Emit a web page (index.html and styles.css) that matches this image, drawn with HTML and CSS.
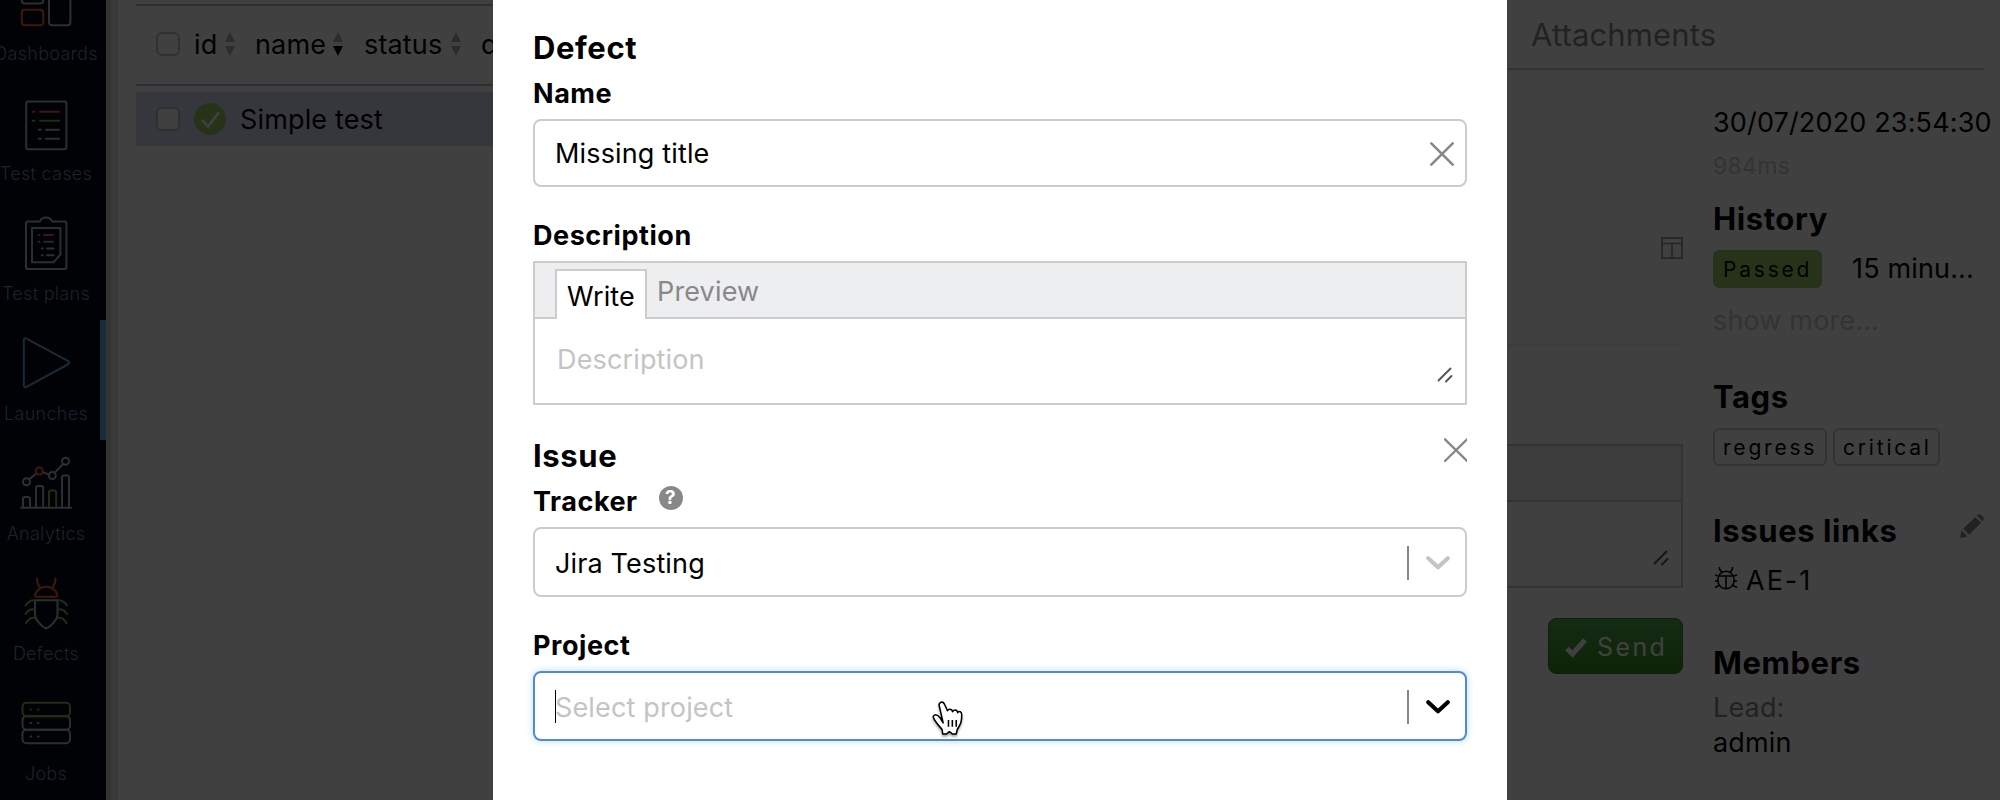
FILE: index.html
```html
<!DOCTYPE html>
<html lang="en">
<head>
    <meta charset="utf-8">
    <title>Launches</title>
    <link rel="stylesheet" href="styles.css">
</head>
<body>

<div class="app">
  <nav class="sidebar">
    <a class="nav-item">
      <svg class="nav-icon" viewBox="0 0 52 52">
        <rect x="1.8" y="2" width="21.4" height="24.6" rx="3"/>
        <rect class="red" x="1.8" y="32.8" width="21.4" height="15.4" rx="3"/>
        <rect x="29" y="2" width="21.4" height="46.2" rx="3"/>
      </svg>
      <span>Dashboards</span>
    </a>
    <a class="nav-item">
      <svg class="nav-icon" viewBox="0 0 52 52">
        <rect x="6.2" y="4.4" width="40.2" height="47.8" rx="2"/>
        <path class="red" d="M12.5 14.7h2M20 14.7h19"/>
        <path class="green" d="M12.5 23.7h2M20 23.7h19"/>
        <path d="M18.8 32.7h2M26 32.7h13M18.8 41.7h2M26 41.7h13"/>
      </svg>
      <span>Test cases</span>
    </a>
    <a class="nav-item">
      <svg class="nav-icon" viewBox="0 0 52 52">
        <path d="M20 4.4H8a2 2 0 0 0-2 2V50a2 2 0 0 0 2 2h36.4a2 2 0 0 0 2-2V6.4a2 2 0 0 0-2-2H32C31 1.5 29 .5 26 .5S21 1.5 20 4.4z"/>
        <path d="M12 11h28.4v26.5L33.5 45.3H12z"/>
        <path class="red" d="M18.5 18h1M24 18h9"/>
        <path class="green" d="M18.5 24.7h1M24 24.7h9"/>
        <path d="M21.8 31.5h1M27 31.5h6.5M21.8 38.3h1M27 38.3h6.5"/>
      </svg>
      <span>Test plans</span>
    </a>
    <a class="nav-item active">
      <svg class="nav-icon" viewBox="0 0 52 52">
        <path d="M3.8 3.5Q3.8 .3 6.5 1.6L47.800 23.900Q50.500 25.800 47.800 27.500L6.500 49.800Q3.800 51 3.800 48z"/>
      </svg>
      <span>Launches</span>
    </a>
    <a class="nav-item">
      <svg class="nav-icon" viewBox="0 0 52 52">
        <path d="M1 50.8h50M3 50V42a2 2 0 0 1 2-2h3a2 2 0 0 1 2 2v8M16 50V31a2 2 0 0 1 2-2h3.2a2 2 0 0 1 2 2v19M42 50V20.5a2 2 0 0 1 2-2h3a2 2 0 0 1 2 2V50"/>
        <path class="green" d="M29 49.5V35.5a2 2 0 0 1 2-2h3.2a2 2 0 0 1 2 2v14"/>
        <path d="M9.3 22.3l7.2-6M22.8 15.2l6 2.2M34.6 15.9l8.6-9.2"/>
        <circle cx="6.5" cy="24.7" r="3.5"/>
        <circle class="red" cx="19.3" cy="14" r="3.5"/>
        <circle cx="32.3" cy="18.5" r="3.5"/>
        <circle cx="45.5" cy="4.3" r="3.5"/>
      </svg>
      <span>Analytics</span>
    </a>
    <a class="nav-item">
      <svg class="nav-icon" viewBox="0 0 52 52">
        <path class="red" d="M17 1.5C17 6 18 8 20 10.5M35.5 1.5C35.5 6 34.5 8 32.5 10.5M16.2 19.8c-1.2 0-1.4-1-1.2-2C17 12.5 21 9.800 26.200 9.800s9.200 2.700 11.200 8c.2 1 0 2-1.200 2z"/>
        <path d="M15 23.2h22.5V37c0 6-7 13-11.3 14.5C22 50 15 43 15 37z"/>
        <path class="green" d="M14.5 23.2C10 23 8 24.5 5.5 28.5M14.5 32.5C10 31.5 8 33.5 5.5 37M14.5 41c-4-1-6 1-8.5 5M38 23.2c4.5-.2 6.5 1.3 9 5.3M38 32.5c4.5-1 6.5 1 9 4.5M38 41c4-1 6 1 8.5 5"/>
      </svg>
      <span>Defects</span>
    </a>
    <a class="nav-item">
      <svg class="nav-icon" viewBox="0 0 52 52">
        <rect x="2.5" y="19.3" width="47.5" height="13.5" rx="4"/>
        <rect x="2.5" y="32.8" width="47.5" height="13.5" rx="4"/>
        <rect class="green" x="2.5" y="5.8" width="47.5" height="13.5" rx="4"/>
        <path class="red" d="M10.5 12.5h.8M17.8 12.5h.8"/>
        <path d="M10.5 26h.8M17.8 26h.8M10.5 39.5h.8M17.8 39.5h.8"/>
      </svg>
      <span>Jobs</span>
    </a>
  </nav>
  <div class="sidebar-edge"></div>

  <section class="tests">
    <div class="tests-head">
      <span class="checkbox"></span>
      <span class="col col-id">id</span>
      <svg class="sort" viewBox="0 0 10 24"><path d="M5 0l5 10H0z"/><path d="M5 24L0 14h10z"/></svg>
      <span class="col col-name">name</span>
      <svg class="sort" viewBox="0 0 10 24"><path d="M5 0l5 10H0z"/><path class="on" d="M5 24L0 14h10z"/></svg>
      <span class="col col-status">status</span>
      <svg class="sort" viewBox="0 0 10 24"><path d="M5 0l5 10H0z"/><path d="M5 24L0 14h10z"/></svg>
      <span class="col col-duration">d</span>
    </div>
    <div class="test-row">
      <span class="checkbox"></span>
      <svg class="status-icon" viewBox="0 0 32 32"><circle cx="16" cy="16" r="16"/><path d="M8.5 17.5l5.5 6L24.5 10"/></svg>
      <span class="test-name">Simple test</span>
    </div>
  </section>

  <section class="details">
    <div class="details-tabs"><span class="details-tab">Attachments</span></div>
    <div class="details-body">
      <div class="details-main">
        <div class="scenario">
          <svg class="layout-icon" viewBox="0 0 22 22"><path d="M1 1h20v20H1zM1 6.5h20M11 6.5V21"/></svg>
        </div>
        <div class="editor comment">
          <div class="editor-tabs"></div>
          <div class="editor-text">
            <svg class="resize" viewBox="0 0 14 14"><path d="M.5 12.5L12.5 .5M8 13.5L13.5 8"/></svg>
          </div>
        </div>
        <button class="send">
          <svg class="send-icon" viewBox="0 0 22 20"><path d="M2 11.5l5.5 5.5L20 3"/></svg>
          <span>Send</span>
        </button>
      </div>

      <aside class="details-side">
        <div class="date">30/07/2020 23:54:30</div>
        <div class="duration">984ms</div>
        <h3 class="side-title history-title">History</h3>
        <div class="history">
          <span class="badge">Passed</span>
          <span class="ago">15 minu...</span>
        </div>
        <div class="more">show more...</div>
        <h3 class="side-title tags-title">Tags</h3>
        <div class="tags">
          <span class="tag tag-regress">regress</span>
          <span class="tag tag-critical">critical</span>
        </div>
        <div class="side-head">
          <h3 class="side-title">Issues links</h3>
          <svg class="pencil" viewBox="0 0 24 24"><path d="M0 24l1.5-7.5 6 6zM3.2 14.8L15.3 2.9l5.8 5.8L9.2 20.8zM16.8 1.5C18.5 0 20 0 21.5 1.3l1.3 1.3c1.300 1.500 1.300 3-.2 4.600z"/></svg>
        </div>
        <div class="issue">
          <svg class="bug" viewBox="0 0 22 23"><path d="M4.5 0c-.3 2.5.5 4 3 5M17.5 0c.3 2.5-.5 4-3 5M3.5 9h15M11 9v12.5M0 8l3 1M22 8l-3 1M0 14h3M22 14h-3M0 20.5l4-2M22 20.5l-4-2"/><ellipse cx="11" cy="13" rx="8.2" ry="8.7"/></svg>
          <span>AE-1</span>
        </div>
        <h3 class="side-title members-title">Members</h3>
        <div class="lead">Lead:</div>
        <div class="member">admin</div>
      </aside>
    </div>
  </section>
</div>

<div class="overlay">
  <div class="modal">
    <h2 class="modal-title">Defect</h2>
    <label class="label">Name</label>
    <div class="field">
      <span class="field-value">Missing title</span>
      <svg class="clear" viewBox="0 0 24 24"><path d="M1.3 1.3l21.4 21.4M22.7 1.3L1.3 22.7"/></svg>
    </div>

    <label class="label next">Description</label>
    <div class="editor">
      <div class="editor-tabs">
        <span class="tab tab-write">Write</span>
        <span class="tab tab-preview">Preview</span>
      </div>
      <div class="editor-text">
        <span class="placeholder">Description</span>
        <svg class="resize" viewBox="0 0 14 14"><path d="M.5 12.5L12.5 .5M8 13.5L13.5 8"/></svg>
      </div>
    </div>

    <div class="modal-head">
      <h2 class="modal-title">Issue</h2>
      <svg class="remove" viewBox="0 0 23 24"><path d="M1 1.3l22 21.7M23 1.3L1 23"/></svg>
    </div>
    <label class="label label-tracker">
      <span>Tracker</span>
      <span class="help">?</span>
    </label>
    <div class="field select">
      <span class="field-value">Jira Testing</span>
      <svg class="chevron" viewBox="0 0 24 14"><path d="M2.2 2.2L12 11.3l9.8-9.1"/></svg>
    </div>

    <label class="label next">Project</label>
    <div class="field select focused">
      <span class="caret"></span>
      <span class="field-value placeholder">Select project</span>
      <svg class="chevron" viewBox="0 0 24 14"><path d="M2.2 2.2L12 11.3l9.8-9.1"/></svg>
    </div>
  </div>
  <svg class="pointer" viewBox="0 0 32 36"><path d="M11.5 22.5L8.5 17.5C7 15.5 4.5 13.5 2.500 14.500S1.200 17.500 3 20c2 3.500 5 6.500 7.500 9.500l.5 4.500h4c1-1 2-2 3-2.300 1 .3 2 1.300 3 2.300h4l1-4.500c2-3.500 4.500-6 4.500-11 0-4 1-6.500-1.200-7.500-1.300-.4-2.300 0-2.800 1-.3-2-1.200-2.800-2.500-2.800s-2.200.7-2.700 1.800C20.800 9.300 20 8.500 18.500 8.500c-1.200 0-2 .5-2.500 1.500L13 3.500C12.200 1.200 10.800.8 9.300 1.300S7 3.300 7.500 5z"/><path class="fingers" d="M17 19.500v7M21 19.500v7M25 19.500v7"/></svg>
</div>

</body>
</html>
```
FILE: styles.css
```css
* {
    box-sizing: border-box;
}

body {
    margin: 0;
    height: 800px;
    overflow: hidden;
    font-family: Inter, "Liberation Sans", sans-serif;
    font-size: 27px;
    letter-spacing: 0.15px;
    color: #000;
    background: #fff;
}

h2, h3 {
    margin: 0;
    font-size: 31px;
    line-height: 39px;
    height: 40px;
    font-weight: 700;
    letter-spacing: 0.6px;
}

svg {
    display: block;
    flex: none;
    fill: none;
    overflow: visible;
}

.app {
    display: flex;
    height: 800px;
    overflow: hidden;
}

/* sidebar */
.sidebar {
    flex: none;
    width: 120px;
    height: 840px;
    margin: -40px 0 0 -14px;
    background: #000818;
}

.nav-item {
    display: flex;
    flex-direction: column;
    align-items: center;
    height: 120px;
    padding-top: 17px;
    color: #7a8494;
    font-size: 18px;
    font-weight: 300;
    line-height: 24px;
    letter-spacing: 0.3px;
}

.nav-item span {
    margin-top: 13px;
}

.nav-item.active {
    color: #5a88ac;
    box-shadow: inset -6px 0 #68b0dc;
}

.nav-icon {
    width: 52px;
    height: 52px;
    stroke: #b4b8bc;
    stroke-width: 2;
    stroke-linecap: round;
    stroke-linejoin: round;
}

.active .nav-icon {
    stroke: #68a8d0;
}

.nav-icon .red {
    stroke: #fd5a3e;
}

.nav-icon .green {
    stroke: #84b452;
}

.sidebar-edge {
    flex: none;
    width: 12px;
    background: #e8e8e8;
    border-left: 5px solid #ccc;
}

/* tests list */
.tests {
    flex: none;
    width: 704px;
    margin: 4px 20px 0 18px;
    border-top: 2px solid #b8b8b8;
}

.tests-head,
.test-row {
    display: flex;
    align-items: center;
    padding-left: 20px;
}

.tests-head {
    height: 80px;
    padding-bottom: 2px;
    border-bottom: 2px solid #b8b8b8;
}

.checkbox {
    flex: none;
    width: 24px;
    height: 24px;
    border: 2px solid #c0c0c0;
    border-radius: 6px;
    background: #fff;
}

.test-row .checkbox {
    border-color: #bbb;
}

.col {
    margin-left: 14px;
}

.col-id {
    width: 23px;
}

.col-name {
    width: 70px;
    margin-left: 20px;
}

.col-status {
    width: 79px;
    margin-left: 21px;
}

.col-duration {
    margin-left: 20px;
}

.sort {
    width: 10px;
    height: 24px;
    margin-left: 8px;
    fill: #b0b0b0;
}

.sort .on {
    fill: #000;
}

.test-row {
    height: 54px;
    margin-top: 6px;
    background: #d4dcf4;
}

.status-icon {
    width: 32px;
    height: 32px;
    margin-left: 14px;
    fill: #97cc64;
}

.status-icon path {
    fill: none;
    stroke: #fff;
    stroke-width: 2.5;
    stroke-linecap: round;
}

.test-name {
    margin-left: 14px;
}

/* test details */
.details {
    flex: 1;
    padding-right: 16px;
}

.details-tabs {
    height: 70px;
    padding: 14px 0 0 671px;
    border-bottom: 2px solid #ccc;
    color: #888;
    font-size: 31px;
    line-height: 41px;
}

.details-body {
    display: grid;
    grid-template-columns: 1fr 271px;
    gap: 30px;
}

.scenario {
    display: flex;
    justify-content: flex-end;
    height: 276px;
    padding-top: 167px;
    border-bottom: 2px solid #eee;
}

.layout-icon {
    width: 22px;
    height: 22px;
    stroke: #888;
    stroke-width: 1.5;
    stroke-linejoin: round;
}

.comment {
    margin-top: 98px;
}

.send {
    display: flex;
    align-items: center;
    width: 135px;
    height: 56px;
    margin: 30px 0 0 auto;
    padding: 1px 0 0 16px;
    border: 1px solid #388828;
    border-radius: 8px;
    background: linear-gradient(#50ac54, #389018);
    color: #fff;
    font-family: inherit;
    font-size: 25px;
    letter-spacing: 2.4px;
}

.send-icon {
    width: 22px;
    height: 20px;
    margin-right: 10px;
    stroke: #fff;
    stroke-width: 5;
}

.date {
    margin-top: 35px;
    line-height: 36px;
    white-space: nowrap;
}

.duration {
    margin-top: 9px;
    color: #ccc;
    font-size: 23px;
    line-height: 32px;
    letter-spacing: 0.3px;
}

.history-title {
    margin-top: 17px;
}

.history {
    display: flex;
    margin-top: 11px;
    line-height: 38px;
}

.badge,
.tag {
    height: 38px;
    border-radius: 6px;
    font-size: 21px;
    letter-spacing: 2.8px;
}

.badge {
    width: 109px;
    padding-left: 10px;
    background: #97cc64;
    line-height: 40px;
}

.ago {
    margin-left: 30px;
}

.more {
    margin-top: 15px;
    color: #ccc;
    line-height: 36px;
}

.tags-title {
    margin-top: 38px;
}

.tags {
    display: flex;
    gap: 6px;
    margin-top: 11px;
}

.tag {
    padding-left: 8px;
    border: 2px solid #ccc;
    line-height: 36px;
}

.tag-regress {
    width: 114px;
}

.tag-critical {
    width: 107px;
}

.side-head {
    display: flex;
    justify-content: space-between;
    margin-top: 45px;
}

.pencil {
    width: 24px;
    height: 24px;
    margin-top: 3px;
    fill: #888;
}

.issue {
    display: flex;
    align-items: center;
    margin-top: 12px;
    padding-left: 2px;
    line-height: 36px;
    letter-spacing: 2px;
}

.bug {
    width: 22px;
    height: 23px;
    margin: -5px 9px 0 0;
    stroke: #000;
    stroke-width: 1.5;
}

.members-title {
    margin-top: 44px;
}

.lead {
    margin-top: 8px;
    color: #888;
    line-height: 34px;
}

.member {
    line-height: 35px;
}

/* modal */
.overlay {
    position: fixed;
    inset: 0;
    display: flex;
    justify-content: center;
    background: rgba(0, 0, 0, 0.75);
}

.modal {
    width: 1014px;
    padding: 28px 40px 0;
    background: #fff;
}

.modal-head {
    display: flex;
    justify-content: space-between;
    margin-top: 31px;
}

.remove {
    width: 23px;
    height: 24px;
    margin-top: 2px;
    overflow: hidden;
    stroke: #888;
    stroke-width: 2.4;
    stroke-linecap: round;
}

.label {
    display: block;
    margin: 9px 0 8px;
    font-weight: 700;
    line-height: 34px;
    letter-spacing: 0.55px;
}

.label.next {
    margin-top: 32px;
}

.label-tracker {
    display: flex;
}

.help {
    width: 24px;
    height: 24px;
    margin: 1px 0 0 21px;
    border-radius: 50%;
    background: #888;
    color: #fff;
    font-size: 19px;
    line-height: 24px;
    text-align: center;
}

.field {
    display: flex;
    align-items: center;
    height: 68px;
    padding: 1px 11px 0 20px;
    border: 2px solid #ccc;
    border-radius: 8px;
}

.field-value {
    flex: 1;
}

.clear {
    width: 24px;
    height: 24px;
    stroke: #888;
    stroke-width: 2.6;
    stroke-linecap: round;
}

.select {
    height: 70px;
    padding-right: 15px;
}

.select .field-value {
    height: 34px;
    line-height: 35px;
    border-right: 2px solid #888;
}

.chevron {
    width: 24px;
    height: 14px;
    margin: 1px 0 0 17px;
    stroke: #c4c4c4;
    stroke-width: 4.2;
    stroke-linecap: round;
    stroke-linejoin: round;
}

.focused {
    border-color: #4f89d8;
    box-shadow: 0 0 7px rgba(100, 180, 240, 0.45);
}

.focused .chevron {
    stroke: #000;
}

.caret {
    width: 1px;
    height: 33px;
    margin-right: -1px;
    background: #000;
}

.placeholder {
    color: #c4c4c4;
}

.editor {
    height: 144px;
    border: 2px solid #ccc;
}

.editor-tabs {
    display: flex;
    height: 56px;
    padding: 6px 0 0 20px;
    border-bottom: 2px solid #ccc;
    background: #edeef0;
}

.tab-write {
    width: 92px;
    height: 50px;
    border: 2px solid #ccc;
    border-bottom: 0;
    background: #fff;
    line-height: 51px;
    text-align: center;
}

.tab-preview {
    margin-left: 10px;
    color: #888;
    line-height: 46px;
}

.editor-text {
    display: flex;
    justify-content: space-between;
    height: 84px;
    padding: 23px 13px 0 22px;
    line-height: 36px;
}

.resize {
    width: 14px;
    height: 14px;
    margin: 26px 0 0 auto;
    stroke: #555;
    stroke-width: 1.9;
    stroke-linecap: round;
}

.pointer {
    position: absolute;
    left: 932px;
    top: 701px;
    width: 31px;
    height: 35px;
    fill: #fff;
    stroke: #000;
    stroke-width: 1.6;
    stroke-linejoin: round;
    filter: drop-shadow(0 2px 1px rgba(0, 0, 0, 0.35));
}
```
